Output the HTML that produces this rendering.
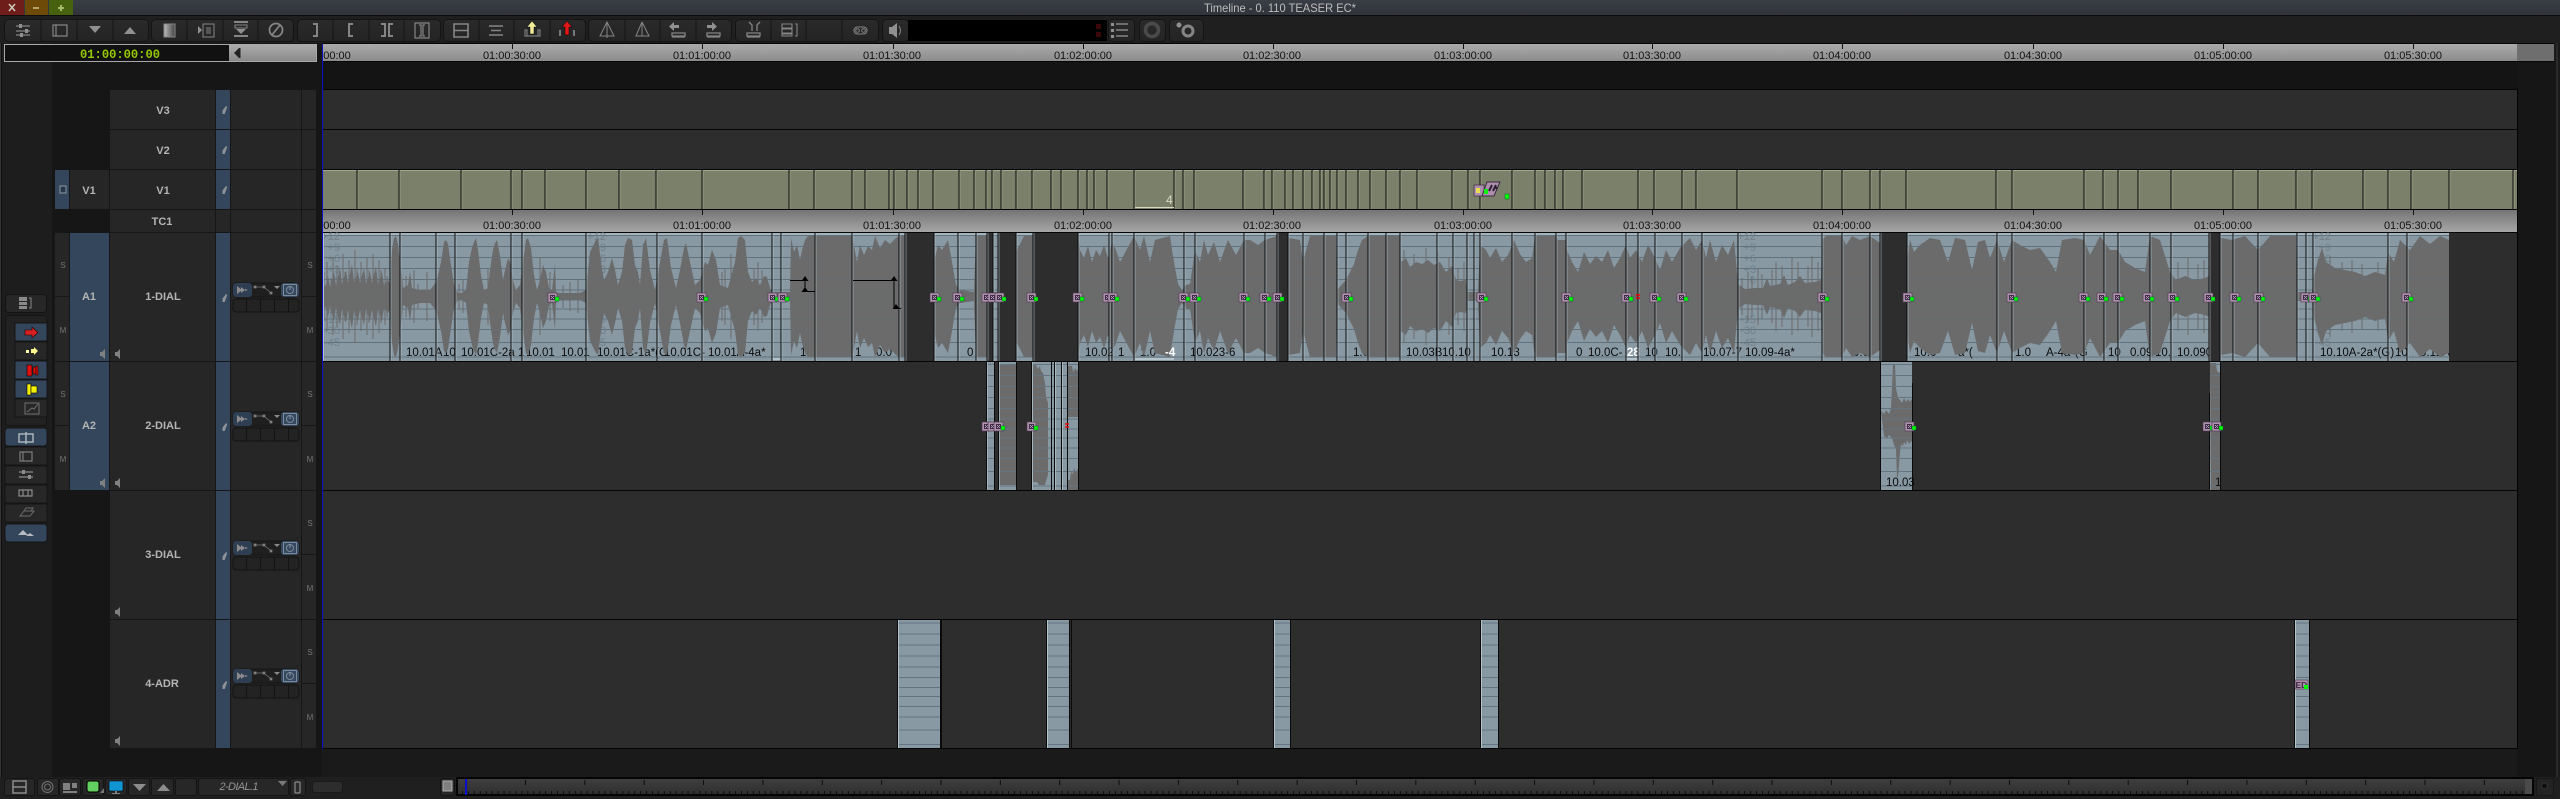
<!DOCTYPE html>
<html><head><meta charset="utf-8"><title>Timeline - 0. 110 TEASER EC*</title>
<style>html,body{margin:0;padding:0;background:#1a1a1a;width:2560px;height:799px;overflow:hidden}svg{display:block}text{font-family:"Liberation Sans",sans-serif}</style></head>
<body>
<svg xmlns="http://www.w3.org/2000/svg" width="2560" height="799" viewBox="0 0 2560 799">
<defs>
<linearGradient id="r1" x1="0" y1="0" x2="0" y2="1"><stop offset="0" stop-color="#ababab"/><stop offset="1" stop-color="#8a8a8a"/></linearGradient>
<linearGradient id="r2" x1="0" y1="0" x2="0" y2="1"><stop offset="0" stop-color="#757575"/><stop offset="1" stop-color="#a6a6a6"/></linearGradient>
<linearGradient id="tb" x1="0" y1="0" x2="0" y2="1"><stop offset="0" stop-color="#3a3e45"/><stop offset="1" stop-color="#30343a"/></linearGradient>
<linearGradient id="btn" x1="0" y1="0" x2="0" y2="1"><stop offset="0" stop-color="#2a2a2a"/><stop offset="1" stop-color="#242424"/></linearGradient>
<linearGradient id="sc" x1="0" y1="0" x2="0" y2="1"><stop offset="0" stop-color="#3f3f3f"/><stop offset="1" stop-color="#2f2f2f"/></linearGradient>
<linearGradient id="dith" x1="0" y1="0" x2="1" y2="0"><stop offset="0" stop-color="#bbb"/><stop offset="1" stop-color="#444"/></linearGradient>
<pattern id="minor" patternUnits="userSpaceOnUse" x="462" y="790" width="5.936" height="5"><rect x="0" y="1" width="1" height="3" fill="#0c0c0c"/></pattern>
<pattern id="major" patternUnits="userSpaceOnUse" x="465.6" y="780" width="59.36" height="6"><rect x="0" y="0" width="1" height="5" fill="#0c0c0c"/></pattern>
<clipPath id="ca1"><rect x="322" y="233" width="2127" height="128"/></clipPath>
<clipPath id="ca3"><rect x="987" y="362" width="7" height="128"/><rect x="999" y="362" width="18" height="128"/><rect x="1032" y="362" width="19" height="128"/><rect x="1052" y="362" width="15" height="128"/><rect x="1068" y="362" width="11" height="128"/><rect x="1881" y="362" width="31" height="128"/><rect x="2210" y="362" width="11" height="128"/></clipPath>
<clipPath id="ca4"><rect x="898" y="620" width="42" height="128"/><rect x="1047" y="620" width="22" height="128"/><rect x="1274" y="620" width="16" height="128"/><rect x="1481" y="620" width="17" height="128"/><rect x="2295" y="620" width="14" height="128"/></clipPath>
<path id="wave" d="M322 296.5L322 288 326 285 328 276 330 287 334 272 336 286 340 268 342 284 346 270 348 283 352 264 354 282 358 272 360 283 364 268 366 284 370 272 372 283 376 266 378 284 382 272 384 285 388 280 390 284 392 250 394 238 396 236 398 245 400 262 402 275 403 288 408 285 410 272 412 288 420 290 430 290 434 285 437 280 441 262 444 242 446 240 448 244 451 265 454 285 458 293 462 293 466 290 469 262 472 248 474 242 476 238 478 250 481 275 484 290 488 288 490 270 493 250 495 243 497 240 500 256 503 280 505 270 508 258 510 262 513 280 516 290 520 285 523 262 526 240 528 238 531 248 534 275 537 290 540 280 543 265 546 272 549 288 552 290 555 264 556 292 560 293 580 293 586 290 590 252 596 240 598 238 601 262 604 280 608 272 612 258 615 270 618 285 622 272 625 245 628 238 632 240 635 265 638 272 640 285 643 245 646 238 650 270 655 290 660 262 664 240 667 238 671 268 676 288 680 270 684 248 686 243 690 262 695 285 700 280 705 262 708 265 712 250 716 260 720 285 728 288 735 262 738 238 741 236 745 240 748 272 752 282 756 278 760 285 764 276 767 277 770 288 772 292 790 292 791 238 794 252 797 245 800 260 802 250 805 240 808 236 852 236 853 240 857 262 860 245 864 255 868 246 872 250 875 236 880 248 885 240 890 244 896 238 899 236 933 236 934 262 938 245 942 250 948 240 952 262 956 285 960 290 974 292 976 236 987 236 993 292 998 292 1017 250 1024 236 1033 236 1078 236 1080 250 1084 258 1088 246 1092 262 1096 250 1100 256 1104 245 1108 258 1112 242 1116 250 1120 262 1134 236 1140 250 1144 236 1150 262 1155 240 1170 236 1172 250 1175 268 1178 284 1182 290 1186 285 1190 284 1195 250 1200 262 1204 240 1208 255 1214 242 1220 262 1228 240 1236 255 1244 240 1250 240 1258 245 1265 240 1277 236 1300 240 1303 262 1310 236 1336 236 1337 290 1346 280 1350 272 1354 264 1358 250 1362 240 1368 236 1400 236 1401 262 1406 258 1410 267 1416 262 1422 264 1428 260 1434 265 1440 262 1446 272 1452 266 1456 280 1460 281 1466 280 1467 292 1478 292 1480 245 1486 250 1490 258 1496 248 1502 262 1508 255 1514 240 1520 254 1526 262 1532 258 1535 236 1556 236 1558 240 1566 240 1567 250 1572 262 1578 272 1584 252 1590 264 1596 256 1602 262 1608 250 1614 268 1620 258 1626 245 1630 258 1636 250 1642 262 1648 245 1655 258 1660 270 1666 250 1672 262 1680 248 1690 238 1696 250 1702 240 1706 258 1710 240 1716 262 1722 245 1728 255 1734 240 1738 284 1745 289 1755 288 1763 288 1767 278 1770 286 1780 284 1784 275 1788 285 1795 282 1800 276 1805 283 1815 282 1821 280 1822 240 1826 236 1842 236 1846 245 1852 236 1860 240 1870 236 1907 262 1910 240 1914 252 1920 245 1930 238 1940 240 1948 262 1955 238 1965 240 1972 270 1978 242 1985 240 1990 258 1997 240 2004 262 2012 240 2020 245 2030 250 2040 248 2050 262 2056 272 2062 240 2075 238 2084 240 2090 255 2100 236 2110 250 2118 250 2125 262 2135 268 2145 272 2150 236 2160 240 2170 272 2176 280 2185 276 2195 280 2205 278 2209 276 2221 238 2232 240 2245 236 2258 250 2270 236 2296 236 2297 292 2312 292 2314 276 2318 260 2322 248 2326 262 2335 268 2345 270 2355 272 2365 276 2375 272 2385 275 2388 252 2394 262 2400 240 2410 250 2420 236 2430 244 2440 236 2449 240 2449 296.5Z"/>
<path id="spikes" d="M324 296V272M327 296V262M331 296V278M333 296V258M337 296V266M339 296V275M343 296V254M345 296V272M349 296V260M351 296V276M355 296V250M357 296V268M361 296V262M363 296V274M367 296V258M369 296V270M373 296V254M375 296V278M379 296V260M381 296V270M385 296V268M387 296V276M406 296V276M414 296V270M418 296V284M427 296V272M459 296V284M463 296V280M488 296V268M540 296V258M550 296V272M563 296V285M570 296V282M578 296V280M722 296V272M725 296V268M731 296V254M754 296V268M758 296V262M762 296V270M1404 296V250M1414 296V254M1426 296V248M1438 296V252M1449 296V258M1458 296V268M1464 296V262M1742 296V278M1748 296V272M1752 296V276M1758 296V268M1762 296V274M1772 296V270M1776 296V262M1782 296V266M1792 296V258M1798 296V262M1808 296V266M1812 296V256M1818 296V262M2178 296V262M2188 296V258M2198 296V264M2204 296V260M2330 296V256M2342 296V262M2352 296V260M2362 296V264M2378 296V262"/>
<path id="grid" d="M0 3.500H2600M0 14.500H2600M0 25.500H2600M0 36.500H2600M0 47.500H2600M0 58H2600M0 68H2600M0 77H2600M0 87H2600M0 97.500H2600M0 110.500H2600M0 125H2600"/>
<path id="v1cuts" d="M357 170V209M399 170V209M461 170V209M511 170V209M522 170V209M545 170V209M586 170V209M619 170V209M656 170V209M702 170V209M789 170V209M814 170V209M852 170V209M865 170V209M889 170V209M894 170V209M907 170V209M918 170V209M933 170V209M959 170V209M974 170V209M986 170V209M992 170V209M1001 170V209M1016 170V209M1032 170V209M1051 170V209M1061 170V209M1078 170V209M1087 170V209M1094 170V209M1107 170V209M1134 170V209M1174 170V209M1183 170V209M1194 170V209M1243 170V209M1264 170V209M1272 170V209M1285 170V209M1293 170V209M1303 170V209M1312 170V209M1320 170V209M1324 170V209M1330 170V209M1337 170V209M1346 170V209M1358 170V209M1370 170V209M1386 170V209M1400 170V209M1417 170V209M1452 170V209M1468 170V209M1480 170V209M1512 170V209M1535 170V209M1545 170V209M1555 170V209M1563 170V209M1582 170V209M1638 170V209M1654 170V209M1682 170V209M1696 170V209M1737 170V209M1822 170V209M1842 170V209M1870 170V209M1880 170V209M1906 170V209M1996 170V209M2012 170V209M2084 170V209M2103 170V209M2118 170V209M2138 170V209M2171 170V209M2233 170V209M2258 170V209M2296 170V209M2312 170V209M2363 170V209M2388 170V209M2411 170V209M2449 170V209M2513 170V209"/>
<path id="a1cuts" d="M390 233V361M400 233V361M436 233V361M455 233V361M511 233V361M522 233V361M586 233V361M657 233V361M702 233V361M772 233V361M781 233V361M815 233V361M852 233V361M899 233V361M905 233V361M934 233V361M958 233V361M976 233V361M987 233V361M993 233V361M998 233V361M1016 233V361M1033 233V361M1078 233V361M1109 233V361M1112 233V361M1134 233V361M1184 233V361M1195 233V361M1244 233V361M1265 233V361M1277 233V361M1288 233V361M1303 233V361M1324 233V361M1337 233V361M1346 233V361M1368 233V361M1386 233V361M1400 233V361M1437 233V361M1453 233V361M1467 233V361M1474 233V361M1480 233V361M1512 233V361M1535 233V361M1556 233V361M1566 233V361M1626 233V361M1638 233V361M1655 233V361M1682 233V361M1702 233V361M1738 233V361M1822 233V361M1842 233V361M1870 233V361M1880 233V361M1907 233V361M1997 233V361M2012 233V361M2084 233V361M2104 233V361M2118 233V361M2150 233V361M2171 233V361M2209 233V361M2220 233V361M2233 233V361M2258 233V361M2297 233V361M2306 233V361M2313 233V361M2388 233V361M2407 233V361"/>
<g id="fx"><rect x="0" y="0" width="9" height="9" fill="#ae8fae" stroke="#4a3a4e" stroke-width=".6"/><rect x="2" y="2" width="5" height="5" fill="#3f2c46"/><path d="M3 3h1v1h-1zM5 3h1v1h-1zM4 4h1v1h-1zM3 5h1v1h-1zM5 5h1v1h-1z" fill="#b79bb8"/><rect x="7" y="4" width="4" height="4" fill="#0f0" stroke="#063" stroke-width=".5"/></g>
<g id="ctl">
<rect x="233" y="0" width="66" height="14" rx="3" fill="#1f1f1f" stroke="#151515"/>
<rect x="233" y="0" width="19" height="14" rx="3" fill="#2e3f53"/>
<rect x="281" y="0" width="18" height="14" rx="3" fill="#34485f"/>
<path d="M237 3v8l5-4zM241 4v6l4-3zM245 6v2l3-1z" fill="#8c8c8c"/>
<path d="M254 3h2v2h-2zM270 9h2v2h-2zM263 3h2v2h-2zM256 4h7M265 5l5 4" stroke="#7a7a7a" stroke-width=".8" fill="#8a8a8a"/><path d="M274 3h6l-3 3z" fill="#8a8a8a"/>
<rect x="283.500" y="1.500" width="13" height="11" fill="none" stroke="#7d8a99"/><circle cx="290" cy="7" r="3.500" fill="none" stroke="#7d8a99"/><path d="M290 3v4" stroke="#8a97a8"/>
<rect x="233" y="16" width="66" height="13" rx="3" fill="#232323" stroke="#131313"/>
<path d="M246.500 16v13M260.500 16v13M274.500 16v13M288.500 16v13" stroke="#131313"/>
</g>
<path id="spk" d="M0 2h2l3-3v10l-3-3h-2z" fill="#808080"/>
<path id="lk" d="M4 0l1.200 1-2.500 7h-2.200v-3.500z" fill="#8d9399"/>
</defs>

<rect width="2560" height="799" fill="#1a1a1a"/>

<!-- title bar -->
<rect width="2560" height="15" fill="url(#tb)"/>
<rect y="15" width="2560" height="1" fill="#0d0d0d"/>
<rect x="0" y="0" width="24" height="15" fill="#6e1d1a"/>
<rect x="25" y="0" width="23" height="15" fill="#6e4a08"/>
<rect x="49" y="0" width="24" height="15" fill="#47620e"/>
<path d="M9 4l6 7M15 4l-6 7" stroke="#ccb" stroke-width="1.500"/>
<path d="M33 8h6" stroke="#b9a26a" stroke-width="2"/>
<path d="M58 8h6M61 5v6" stroke="#a5b96a" stroke-width="2"/>
<text x="1204" y="12" font-size="12" fill="#bdbdbd" textLength="152" lengthAdjust="spacingAndGlyphs">Timeline - 0. 110 TEASER EC*</text>

<!-- toolbar -->
<rect y="16" width="2560" height="27" fill="#1f1f1f"/>
<g fill="url(#btn)" stroke="#141414">
<rect x="4.500" y="19.500" width="144" height="22" rx="4"/>
<rect x="151.500" y="19.500" width="142" height="22" rx="4"/>
<rect x="297.500" y="19.500" width="143" height="22" rx="4"/>
<rect x="443.500" y="19.500" width="142" height="22" rx="4"/>
<rect x="588.500" y="19.500" width="143" height="22" rx="4"/>
<rect x="735.500" y="19.500" width="143" height="22" rx="4"/>
<rect x="882.500" y="19.500" width="26" height="22" rx="4"/>
<rect x="1108.500" y="19.500" width="26" height="22" rx="4"/>
<rect x="1139.500" y="19.500" width="26" height="22" rx="4"/>
<rect x="1169.500" y="19.500" width="34" height="22" rx="4"/>
</g>
<path d="M41 20v21M77 20v21M113 20v21M187 20v21M223 20v21M258 20v21M333 20v21M369 20v21M404 20v21M479 20v21M514 20v21M550 20v21M625 20v21M660 20v21M696 20v21M771 20v21M806 20v21M842 20v21" stroke="#151515"/>
<rect x="908" y="20" width="199" height="21" fill="#000"/>
<rect x="1096" y="24" width="5" height="5" fill="#3a0808"/><rect x="1096" y="32" width="5" height="5" fill="#3a0808"/>
<!-- toolbar icons -->
<g fill="none" stroke="#858585" stroke-width="2">
<path d="M16 26h14M16 31h14M16 35h14" stroke-width="1.300"/>
<path d="M53 25h14v11h-14zM56 25v11" stroke-width="1.200"/>
<path d="M234 22h14M234 36h14" stroke-width="2"/>
<path d="M235 25h12v3h-12z" stroke-width="1"/>
<circle cx="276" cy="30" r="6.500" stroke-width="1.800"/><path d="M272 35l8-10" stroke-width="1.800"/>
<path d="M313 24h4v12h-4" stroke-width="2"/>
<path d="M353 24h-4v12h4" stroke-width="2"/>
<path d="M381 24h4v12h-4M393 24h-4v12h4" stroke-width="2"/>
<path d="M415 23h14v15h-14zM419 25h2v11h-2M425 25h-2v11h2" stroke-width="1.200"/>
<path d="M454 24h14v13h-14zM454 30.500h14" stroke-width="1.600"/>
<path d="M489 26h14M489 35h14M491 30.500h10" stroke-width="1.600"/>
<path d="M607 22l-7 14h14zM607 22v16" stroke-width="1"/>
<path d="M642 22v14h7zM642 22l-6 14h6" stroke-width="1"/>
<path d="M672 33h13v3h-13zM672 37h13" stroke-width="1.300"/>
<path d="M707 33h13v3h-13zM707 37h13" stroke-width="1.300"/>
<path d="M747 33h13v3h-13zM747 37h13M749 22l3 3v6M760 22l-3 3v6" stroke-width="1.300"/>
<path d="M782 24h10v4h-10zM782 29h10v4h-10zM782 34h10v2h-10zM795 24h2v12h-2" stroke-width="1.100"/>
<rect x="854" y="27" width="13" height="7" rx="3.500" stroke-width="1.100"/><circle cx="857.500" cy="30.500" r="1.800" stroke-width="1"/><circle cx="863.500" cy="30.500" r="1.800" stroke-width="1"/>
<path d="M1116 24h12M1116 30h12M1116 36h12" stroke-width="1.500"/>
<circle cx="1152" cy="30" r="6.500" stroke="#4a4a4a" stroke-width="3.500"/>
<circle cx="1188" cy="31" r="5" stroke-width="3"/>
</g>
<g fill="#909090">
<rect x="19" y="24" width="3" height="4"/><rect x="25" y="29" width="3" height="4"/><rect x="20" y="33" width="3" height="4"/>
<path d="M89 26h12l-6 7zM124 34h12l-6-7z"/>
<rect x="164" y="24" width="11" height="13" fill="url(#dith)" stroke="#888"/>
<path d="M198 26v8l4-4z"/><rect x="203" y="24" width="11" height="13" fill="none" stroke="#858585"/><rect x="206" y="27" width="5" height="7" fill="#555"/>
<path d="M236 29h10l-5 5z"/>
<path d="M712 22l5 4.500-5 4.500v-3h-5v-3h5zM674 22l-5 4.500 5 4.500v-3h5v-3h-5z"/>
<path d="M889 27h3l5-4v15l-5-4h-3z"/><path d="M899 26c2 3 2 6 0 9" stroke="#888" fill="none"/>
<rect x="1111" y="23" width="3" height="3"/><rect x="1111" y="29" width="3" height="3"/><rect x="1111" y="35" width="3" height="3"/>
<circle cx="1179" cy="25" r="2.500"/>
</g>
<path d="M532 21l5 6h-3v7h-4v-7h-3z" fill="#f2ec9a" stroke="#000" stroke-width=".5"/>
<path d="M525 36h2v-6h-2zM538 36h2v-6h-2zM527 36h11" stroke="#777" stroke-width="1.200" fill="none"/>
<path d="M567 21l5 6h-3v8h-4v-8h-3z" fill="#e01818" stroke="#000" stroke-width=".5"/>
<path d="M560 36v-6M574 36v-6" stroke="#777" stroke-width="2" fill="none"/>

<!-- left panel bg -->
<rect y="43" width="322" height="734" fill="#161616"/>
<rect y="43" width="52" height="734" fill="#1d1d1d"/>
<rect x="0" y="43" width="1" height="756" fill="#333"/>
<rect x="1" y="43" width="1" height="756" fill="#111"/>

<!-- timecode box -->
<rect x="4" y="44" width="313" height="18" fill="#a8a8a8"/>
<rect x="5" y="45" width="224" height="16" fill="#111"/>
<rect x="229" y="45" width="87" height="16" fill="url(#r1)"/>
<path d="M239 48v10l-5-5z" fill="#222"/><rect x="239" y="48" width="1.500" height="10" fill="#222"/>
<text x="80" y="58" font-size="13" font-weight="bold" fill="#96c800" textLength="80" lengthAdjust="spacingAndGlyphs" style="font-family:'Liberation Mono',monospace">01:00:00:00</text>

<!-- main track bg -->
<rect x="322" y="44" width="2195" height="18" fill="url(#r1)"/>
<rect x="2517" y="44" width="37" height="18" fill="#6e6e6e"/>
<rect x="322" y="43" width="2232" height="1" fill="#050505"/>
<rect x="322" y="61" width="2232" height="1" fill="#050505"/>
<rect x="322" y="62" width="2195" height="27" fill="#141414"/>
<rect x="322" y="89" width="2195" height="660" fill="#2d2d2d"/>
<rect x="2517" y="62" width="40" height="715" fill="#161616"/>
<rect x="2556" y="43" width="2" height="756" fill="#2a2a2a"/>
<path d="M322 89.500H2517M322 129.500H2517M322 169.500H2517" stroke="#050505"/>
<path d="M322 748.500H2518M2517.500 89V749" stroke="#050505"/>

<!-- first ruler -->
<path d="M512.500 44v5M702.500 44v5M893.500 44v5M1083.500 44v5M1273.500 44v5M1463.500 44v5M1652.500 44v5M1842.500 44v5M2033.500 44v5M2223.500 44v5M2413.500 44v5" stroke="#111"/>
<g font-size="11" fill="#111" text-anchor="middle">
<text x="337" y="59">00:00</text>
<text x="512" y="59">01:00:30:00</text><text x="702" y="59">01:01:00:00</text><text x="892" y="59">01:01:30:00</text><text x="1083" y="59">01:02:00:00</text><text x="1272" y="59">01:02:30:00</text><text x="1463" y="59">01:03:00:00</text><text x="1652" y="59">01:03:30:00</text><text x="1842" y="59">01:04:00:00</text><text x="2033" y="59">01:04:30:00</text><text x="2223" y="59">01:05:00:00</text><text x="2413" y="59">01:05:30:00</text>
</g>

<!-- V1 clips -->
<rect x="322" y="170" width="2195" height="39" fill="#7a8069"/>
<rect x="322" y="170" width="2195" height="1" fill="#a3a88f"/>
<use href="#v1cuts" x="1" stroke="#969b83" stroke-width="1"/>
<use href="#v1cuts" stroke="#0a0a0a" stroke-width="1"/>
<text x="1166" y="204" font-size="12" fill="#d9d9c4">4</text>
<rect x="1135" y="207" width="39" height="1" fill="#d9d9c0"/>
<path d="M322 209.500H2517" stroke="#050505"/>
<g>
<rect x="1474" y="185" width="10" height="11" fill="#ae8fae" stroke="#3a2a3e" stroke-width=".7"/>
<rect x="1476" y="188" width="4" height="5" fill="#e8dc50"/>
<path d="M1487 182h13l-6 14h-12z" fill="#ae8fae" stroke="#3a2a3e"/>
<path d="M1489 191l3-6M1493 191l3-6M1497 187l-1 2" stroke="#2c1e30" stroke-width="2"/>
<rect x="1484" y="189" width="4" height="5" fill="#1e1"/>
<rect x="1505" y="194" width="4" height="5" fill="#0f0" stroke="#063" stroke-width=".5"/>
</g>

<!-- second ruler -->
<rect x="322" y="210" width="2195" height="22" fill="url(#r2)"/>
<path d="M512.500 210v5M702.500 210v5M893.500 210v5M1083.500 210v5M1273.500 210v5M1463.500 210v5M1652.500 210v5M1842.500 210v5M2033.500 210v5M2223.500 210v5M2413.500 210v5" stroke="#111"/>
<g font-size="11" fill="#111" text-anchor="middle">
<text x="337" y="229">00:00</text>
<text x="512" y="229">01:00:30:00</text><text x="702" y="229">01:01:00:00</text><text x="892" y="229">01:01:30:00</text><text x="1083" y="229">01:02:00:00</text><text x="1272" y="229">01:02:30:00</text><text x="1463" y="229">01:03:00:00</text><text x="1652" y="229">01:03:30:00</text><text x="1842" y="229">01:04:00:00</text><text x="2033" y="229">01:04:30:00</text><text x="2223" y="229">01:05:00:00</text><text x="2413" y="229">01:05:30:00</text>
</g>
<path d="M322 232.500H2517" stroke="#050505"/>

<!-- A1 -->
<rect x="322" y="233" width="2127" height="128" fill="#8899a4"/>
<rect x="322" y="233" width="2127" height="2" fill="#a3b4bd"/>
<g clip-path="url(#ca1)"><use href="#grid" y="232" stroke="#647480" stroke-width="1"/></g>
<g font-size="11" fill="#6f808b" text-anchor="end">
<text x="340" y="240">+12</text><text x="340" y="251">+9</text><text x="340" y="262">+6</text><text x="340" y="273">+3</text><text x="340" y="284">0</text><text x="340" y="295">-3</text><text x="340" y="304">-7</text><text x="340" y="313">-11</text><text x="340" y="323">-15</text><text x="340" y="334">-30</text><text x="340" y="346">-45</text>
<text x="606" y="240">+12</text><text x="606" y="251">+9</text><text x="606" y="262">+6</text><text x="606" y="273">+3</text><text x="606" y="323">-15</text><text x="606" y="334">-30</text><text x="606" y="346">-45</text>
<text x="1756" y="240">+12</text><text x="1756" y="251">+9</text><text x="1756" y="262">+6</text><text x="1756" y="273">+3</text><text x="1756" y="284">0</text><text x="1756" y="323">-15</text><text x="1756" y="334">-30</text><text x="1756" y="346">-45</text>
<text x="2331" y="240">+12</text><text x="2331" y="251">+9</text><text x="2331" y="262">+6</text><text x="2331" y="273">+3</text><text x="2331" y="284">0</text><text x="2331" y="323">-15</text><text x="2331" y="334">-30</text><text x="2331" y="346">-45</text>
</g>
<g font-size="11.500" fill="#0a0a0a">
<text x="406" y="356">10.01A</text><text x="443" y="356">10</text><text x="461" y="356">10.01C-2a</text><text x="518" y="356">1</text><text x="526" y="356">10.01</text><text x="561" y="356">10.01</text><text x="597" y="356">10.01C-1a*(G</text><text x="664" y="356">10.01C-</text><text x="708" y="356">10.01A-4a*</text>
<text x="800" y="356">10</text><text x="837" y="356">0.0</text><text x="855" y="356">1</text><text x="876" y="356">0.0</text><text x="967" y="356">0</text>
<text x="1085" y="356">10.02</text><text x="1118" y="356">1</text><text x="1140" y="356">1.0</text><text x="1190" y="356">10.023-6</text><text x="1272" y="356">10</text><text x="1310" y="356">1</text><text x="1353" y="356">1.0</text><text x="1406" y="356">10.03B</text><text x="1442" y="356">10.10</text><text x="1491" y="356">10.13</text><text x="1541" y="356">10.</text><text x="1576" y="356">0</text><text x="1588" y="356">10.0C-</text><text x="1645" y="356">10</text><text x="1665" y="356">10.</text>
<text x="1703" y="356">10.07-7</text><text x="1745" y="356">10.09-4a*</text><text x="1853" y="356">0.0</text><text x="1914" y="356">10.0</text><text x="1958" y="356">a*(</text><text x="2015" y="356">1.0</text><text x="2046" y="356">A-4a*(G</text><text x="2108" y="356">10</text><text x="2130" y="356">0.09</text><text x="2155" y="356">10.</text><text x="2177" y="356">10.090</text><text x="2270" y="356">0.90</text><text x="2320" y="356">10.10A-2a*(G)</text><text x="2395" y="356">10</text><text x="2420" y="356">0.12A</text>
</g>
<use href="#wave" fill="#6b6b6b"/>
<use href="#wave" fill="#6b6b6b" transform="translate(0 593) scale(1 -1)"/>
<use href="#spikes" stroke="#6b6b6b" stroke-width="1" fill="none"/>
<use href="#spikes" stroke="#6b6b6b" stroke-width="1" fill="none" transform="translate(0 593) scale(1 -1)"/>
<g clip-path="url(#ca1)"><use href="#grid" y="232" stroke="#5f6f79" stroke-width="1" opacity=".35"/></g>
<g font-size="11.500" font-weight="bold" fill="#fff"><text x="1165" y="356">-4</text><text x="1627" y="356">28</text></g>
<path d="M1135 359h39M1626 359h12M772 359h9" stroke="#e4eef2"/>
<!-- gaps -->
<g fill="#2d2d2d"><rect x="905" y="233" width="29" height="128"/><rect x="987" y="233" width="6" height="128"/><rect x="998" y="233" width="18" height="128"/><rect x="1033" y="233" width="45" height="128"/><rect x="1277" y="233" width="11" height="128"/><rect x="1880" y="233" width="27" height="128"/><rect x="2209" y="233" width="11" height="128"/></g>
<use href="#a1cuts" x="1" stroke="#b3c4cc" stroke-width="1" opacity=".6"/>
<use href="#a1cuts" stroke="#0a0a0a" stroke-width="1"/>
<rect x="322" y="233" width="2" height="128" fill="#b3c4cc"/>
<path d="M322 361.500H2517M322 490.500H2517M322 619.500H2517" stroke="#050505"/>
<!-- keyframes -->
<g stroke="#000" fill="none"><path d="M790 280.500h15v11h10M853 280.500h41v27l7 1"/></g>
<path d="M805 276l3.500 5h-7zM805 287l3.500 5h-7zM894 276l3.500 5h-7zM896 304l3.500 5h-7z" fill="#000"/>
<!-- A1 effects -->
<g>
<use href="#fx" x="548" y="293"/><use href="#fx" x="697" y="293"/><use href="#fx" x="768" y="293"/><use href="#fx" x="778" y="293"/><use href="#fx" x="930" y="293"/><use href="#fx" x="953" y="293"/><use href="#fx" x="982" y="293"/><use href="#fx" x="988" y="293"/><use href="#fx" x="995" y="293"/><use href="#fx" x="1027" y="293"/><use href="#fx" x="1073" y="293"/><use href="#fx" x="1103" y="293"/><use href="#fx" x="1108" y="293"/><use href="#fx" x="1179" y="293"/><use href="#fx" x="1190" y="293"/><use href="#fx" x="1239" y="293"/><use href="#fx" x="1260" y="293"/><use href="#fx" x="1273" y="293"/><use href="#fx" x="1342" y="293"/><use href="#fx" x="1477" y="293"/><use href="#fx" x="1562" y="293"/><use href="#fx" x="1622" y="293"/><use href="#fx" x="1650" y="293"/><use href="#fx" x="1677" y="293"/><use href="#fx" x="1818" y="293"/><use href="#fx" x="1903" y="293"/><use href="#fx" x="2007" y="293"/><use href="#fx" x="2079" y="293"/><use href="#fx" x="2097" y="293"/><use href="#fx" x="2113" y="293"/><use href="#fx" x="2143" y="293"/><use href="#fx" x="2168" y="293"/><use href="#fx" x="2204" y="293"/><use href="#fx" x="2230" y="293"/><use href="#fx" x="2254" y="293"/><use href="#fx" x="2301" y="293"/><use href="#fx" x="2309" y="293"/><use href="#fx" x="2402" y="293"/>
</g>
<path d="M1636 295h4M1636 298h4" stroke="#e00" stroke-width="1.500"/>

<!-- A2 clips -->
<g fill="#8899a4"><rect x="987" y="362" width="7" height="128"/><rect x="999" y="362" width="18" height="128"/><rect x="1032" y="362" width="19" height="128"/><rect x="1052" y="362" width="3" height="128"/><rect x="1055" y="362" width="6" height="128"/><rect x="1062" y="362" width="5" height="128"/><rect x="1068" y="362" width="11" height="128"/><rect x="1881" y="362" width="31" height="128"/><rect x="2210" y="362" width="11" height="128"/></g>
<g clip-path="url(#ca3)">
<path d="M999 365h18v120h-18zM1033 365h3l2 4 2-3 1 5 2 2 2 10 1 14 2 6v72l-2 6-1 4h-6l-2-3h-4zM2210 363h6l1 8 4 3v116h-10z" fill="#6b6b6b"/>
<path d="M1068 366h4l1 6 2-4 2 3 2-4v50h-11zM1068 480h2l1-8 2 2 1-6 2 4 3-6v30h-11z" fill="#6b6b6b"/>
<path d="M1881 411l3 3 2-4 3 4 2-6 1-20 1-24 2 0 1 24 2 10 2 2 2 3 2-5 2 4 2-3 2 3 1-3 2 2v42l-2-2-2 3-2-4-1 5-2-3-1 4-2-2-1 8-2 25-1 0-1-28-2-4-2-7-3-3-2 3-3-2z" fill="#6b6b6b"/>
<use href="#grid" y="361" stroke="#647480" stroke-width="1"/>
</g>
<path d="M986.500 362v128M994.500 362v128M998.500 362v128M1016.500 362v128M1031.500 362v128M1051.500 362v128M1054.500 362v128M1061.500 362v128M1067.500 362v128M1078.500 362v128M1880.500 362v128M1912.500 383v107M2209.500 393v97M2220.500 362v128" stroke="#0a0a0a"/>
<path d="M987.500 362v128M999.500 362v128M1032.500 362v128M1055.500 362v128M1062.500 362v128" stroke="#b3c4cc" opacity=".7"/>
<text x="1886" y="486" font-size="11.500" fill="#0a0a0a">10.03</text>
<text x="2215" y="486" font-size="11.500" fill="#0a0a0a">1</text>
<use href="#fx" x="982" y="422"/><use href="#fx" x="988" y="422"/><use href="#fx" x="994" y="422"/><use href="#fx" x="1027" y="422"/><use href="#fx" x="1905" y="422"/><use href="#fx" x="2203" y="422"/><use href="#fx" x="2212" y="422"/>
<path d="M1065 424h4M1065 427h4" stroke="#e00" stroke-width="1.500"/>

<!-- A4 clips -->
<g fill="#8899a4"><rect x="898" y="620" width="42" height="128"/><rect x="1047" y="620" width="22" height="128"/><rect x="1274" y="620" width="16" height="128"/><rect x="1481" y="620" width="17" height="128"/><rect x="2295" y="620" width="14" height="128"/></g>
<g clip-path="url(#ca4)"><use href="#grid" y="619.500" stroke="#647480" stroke-width="1"/></g>
<path d="M898.500 620v128M1047.500 620v128M1274.500 620v128M1481.500 620v128M2295.500 620v128" stroke="#b3c4cc"/>
<path d="M897.500 620v128M940.500 620v128M941.500 620v128M1046.500 620v128M1069.500 620v128M1071.500 620v128M1273.500 620v128M1290.500 620v128M1480.500 620v128M1498.500 620v128M2294.500 620v128M2309.500 620v128" stroke="#0a0a0a"/>
<rect x="2295" y="680" width="13" height="9" fill="#ae8fae" stroke="#4a3a4e" stroke-width=".6"/>
<text x="2295.500" y="688" font-size="8.500" font-weight="bold" fill="#3a2a3e">ED</text>
<rect x="2304" y="685" width="4" height="4" fill="#0f0"/>

<!-- playhead -->
<rect x="322" y="44" width="1" height="705" fill="#0a10c8"/>

<!-- track headers -->
<g fill="#262626">
<rect x="110" y="90" width="105" height="39"/><rect x="110" y="130" width="105" height="39"/><rect x="110" y="170" width="105" height="39"/>
<rect x="110" y="210" width="105" height="22"/>
<rect x="110" y="233" width="105" height="128"/><rect x="110" y="362" width="105" height="128"/><rect x="110" y="491" width="105" height="128"/><rect x="110" y="620" width="105" height="128"/>
<rect x="231" y="90" width="70" height="39"/><rect x="231" y="130" width="70" height="39"/><rect x="231" y="170" width="70" height="39"/><rect x="231" y="210" width="70" height="22"/><rect x="216" y="210" width="14" height="22"/>
<rect x="231" y="233" width="70" height="128"/><rect x="231" y="362" width="70" height="128"/><rect x="231" y="491" width="70" height="128"/><rect x="231" y="620" width="70" height="128"/>
<rect x="302" y="90" width="14" height="39"/><rect x="302" y="130" width="14" height="39"/><rect x="302" y="170" width="14" height="39"/><rect x="302" y="210" width="14" height="22"/>
<rect x="302" y="233" width="14" height="63"/><rect x="302" y="297" width="14" height="64"/><rect x="302" y="362" width="14" height="63"/><rect x="302" y="426" width="14" height="64"/><rect x="302" y="491" width="14" height="63"/><rect x="302" y="555" width="14" height="64"/><rect x="302" y="620" width="14" height="63"/><rect x="302" y="684" width="14" height="64"/>
<rect x="70" y="170" width="39" height="39"/>
<rect x="55" y="233" width="14" height="63"/><rect x="55" y="297" width="14" height="64"/><rect x="55" y="362" width="14" height="63"/><rect x="55" y="426" width="14" height="64"/>
</g>
<g fill="#33465b">
<rect x="216" y="90" width="14" height="39"/><rect x="216" y="130" width="14" height="39"/><rect x="216" y="170" width="14" height="39"/>
<rect x="216" y="233" width="14" height="128"/><rect x="216" y="362" width="14" height="128"/><rect x="216" y="491" width="14" height="128"/><rect x="216" y="620" width="14" height="128"/>
<rect x="55" y="170" width="14" height="39"/>
<rect x="70" y="233" width="39" height="128"/><rect x="70" y="362" width="39" height="128"/>
</g>
<rect x="60" y="186" width="6" height="7" fill="#26374a" stroke="#8f98a2"/>
<g>
<use href="#lk" x="222" y="106"/><use href="#lk" x="222" y="146"/><use href="#lk" x="222" y="186"/>
<use href="#lk" x="222" y="294"/><use href="#lk" x="222" y="423"/><use href="#lk" x="222" y="552"/><use href="#lk" x="222" y="681"/>
<use href="#spk" x="100" y="350"/><use href="#spk" x="115" y="350"/><use href="#spk" x="100" y="479"/><use href="#spk" x="115" y="479"/><use href="#spk" x="115" y="608"/><use href="#spk" x="115" y="737"/>
<use href="#ctl" y="283"/><use href="#ctl" y="412"/><use href="#ctl" y="541"/><use href="#ctl" y="669"/>
</g>
<g font-size="11" font-weight="bold" fill="#b4b4b4" text-anchor="middle">
<text x="163" y="114">V3</text><text x="163" y="154">V2</text><text x="163" y="194">V1</text><text x="89" y="194">V1</text><text x="162" y="225">TC1</text>
<text x="89" y="300">A1</text><text x="89" y="429">A2</text>
<text x="163" y="300">1-DIAL</text><text x="163" y="429">2-DIAL</text><text x="163" y="558">3-DIAL</text><text x="162" y="687">4-ADR</text>
</g>
<g font-size="8" fill="#757575" text-anchor="middle">
<text x="63" y="268">S</text><text x="63" y="333">M</text><text x="63" y="397">S</text><text x="63" y="462">M</text>
<text x="310" y="268">S</text><text x="310" y="333">M</text><text x="310" y="397">S</text><text x="310" y="462">M</text><text x="310" y="526">S</text><text x="310" y="591">M</text><text x="310" y="655">S</text><text x="310" y="720">M</text>
</g>

<!-- left tool palette -->
<rect x="5.500" y="294.500" width="41" height="18" rx="3" fill="#272727" stroke="#141414"/>
<path d="M19 297h8v4h-8zM19 302h8v3h-8zM19 306h8v3h-8z" fill="#8a8a8a"/><path d="M29 298h2v10h-2" stroke="#8a8a8a" fill="none"/>
<rect x="5.500" y="315.500" width="41" height="110" rx="3" fill="#222" stroke="#141414"/>
<rect x="15" y="323" width="32" height="18" fill="#33465b" stroke="#141414"/>
<rect x="15" y="342" width="32" height="18" fill="#272727" stroke="#141414"/>
<rect x="15" y="361" width="32" height="18" fill="#33465b" stroke="#141414"/>
<rect x="15" y="380" width="32" height="18" fill="#33465b" stroke="#141414"/>
<rect x="15" y="399" width="32" height="18" fill="#272727" stroke="#141414"/>
<path d="M25 330h7v-3l6 5.500-6 5.500v-3h-7z" fill="#d92020" stroke="#200" stroke-width=".6"/>
<rect x="26" y="350" width="3" height="3" fill="#ffffb0"/>
<path d="M31 349h3v-2l4 4-4 4v-2h-3z" fill="#fdf690"/>
<rect x="27" y="365" width="5" height="11" fill="#e31010" stroke="#000" stroke-width=".6"/><rect x="33" y="367" width="3" height="7" fill="#e31010" stroke="#000" stroke-width=".6"/><rect x="36" y="366" width="2" height="9" fill="#e31010" stroke="#000" stroke-width=".5"/>
<rect x="27" y="384" width="4" height="11" fill="#f4f000" stroke="#000" stroke-width=".6"/><rect x="31" y="386" width="6" height="7" fill="#f4f000" stroke="#000" stroke-width=".6"/>
<path d="M25 403h14v11h-14zM27 412l5-4 2 1 4-5" fill="none" stroke="#707070"/>
<rect x="5" y="428" width="42" height="18" rx="3" fill="#33465b" stroke="#141414"/>
<path d="M19 434h14v8h-14zM26 432v12" fill="none" stroke="#aab2ba" stroke-width="1.500"/>
<rect x="5" y="447" width="42" height="18" fill="#272727" stroke="#141414"/>
<rect x="5" y="466" width="42" height="18" fill="#272727" stroke="#141414"/>
<rect x="5" y="485" width="42" height="18" fill="#272727" stroke="#141414"/>
<rect x="5" y="504" width="42" height="18" fill="#272727" stroke="#141414"/>
<rect x="5" y="524" width="42" height="18" rx="3" fill="#33465b" stroke="#141414"/>
<path d="M20 452h12v9h-12zM23 452v9" fill="none" stroke="#7c7c7c" stroke-width="1.200"/>
<path d="M19 472h14M19 477h14" stroke="#7c7c7c" stroke-width="1.500"/><rect x="22" y="470" width="3" height="4" fill="#8c8c8c"/><rect x="28" y="475" width="3" height="4" fill="#8c8c8c"/>
<path d="M19 490h13v6h-13zM23 490v6M28 490v6" fill="none" stroke="#8a8a8a" stroke-width="1.200"/>
<path d="M20 516l4-5h10l-4 5zM24 511l2-3h7l-2 3" fill="none" stroke="#6c6c6c"/>
<path d="M18 535l5-5 5 5zM26 536l4-3 4 3z" fill="#b8bcc0"/>

<!-- bottom bar -->
<rect y="777" width="2560" height="22" fill="#1f1f1f"/>
<g fill="#272727" stroke="#141414">
<rect x="4.500" y="778.500" width="30" height="17" rx="2"/><rect x="37.500" y="778.500" width="21" height="17" rx="2"/><rect x="59.500" y="778.500" width="21" height="17" rx="2"/><rect x="82.500" y="778.500" width="21" height="17" rx="2"/><rect x="105.500" y="778.500" width="21" height="17" rx="2"/><rect x="128.500" y="778.500" width="21" height="17" rx="2"/><rect x="151.500" y="778.500" width="22" height="17" rx="2"/><rect x="175.500" y="778.500" width="21" height="17" rx="2"/><rect x="198.500" y="778.500" width="90" height="17" rx="2"/><rect x="290.500" y="778.500" width="15" height="17" rx="2"/><rect x="440.500" y="778.500" width="14" height="17" rx="2"/>
</g>
<rect x="312.500" y="781.500" width="30" height="11" rx="3" fill="#2d2d2d" stroke="#1a1a1a"/>
<path d="M13 781h13v12h-13zM13 787h13" fill="none" stroke="#8c8c8c" stroke-width="1.500"/>
<circle cx="47.500" cy="787" r="5.500" fill="none" stroke="#727272"/><circle cx="47.500" cy="787" r="3" fill="none" stroke="#727272"/>
<path d="M63 783h7v7h-7zM72 783h5v5h-5zM63 791h14v2h-14z" fill="#808080"/>
<rect x="87" y="781" width="12" height="11" rx="2.500" fill="#62d060" stroke="#000"/><path d="M100 793h4v-5z" fill="#777"/>
<rect x="109" y="781" width="14" height="10" rx="1" fill="#0f96d2" stroke="#000" stroke-width=".6"/><path d="M115 791h2v2h3v1h-8v-1h3z" fill="#808080"/>
<path d="M133 784h13l-6.500 7zM157 791h13l-6.500-7z" fill="#8c8c8c"/>
<text x="239" y="790" font-size="11" font-style="italic" fill="#949494" text-anchor="middle" textLength="39">2-DIAL.1</text>
<path d="M278 781h9l-4.500 5z" fill="#7a7a7a"/>
<rect x="295" y="782" width="5" height="11" rx="1" fill="#2a2a2a" stroke="#8c8c8c" stroke-width="1.200"/>
<rect x="443" y="781" width="9" height="10" fill="#808080" stroke="#b0b0b0"/>
<rect x="456" y="777" width="2078" height="19" fill="#050505"/>
<rect x="458" y="779" width="2074" height="15" fill="url(#sc)"/>
<rect x="458" y="780" width="2074" height="6" fill="url(#major)"/>
<rect x="458" y="790" width="2067" height="5" fill="url(#minor)"/>
<rect x="2525" y="779" width="7" height="15" fill="#4a4a4a"/>
<rect x="465" y="779" width="2" height="16" fill="#0a10c8"/>
<rect x="2536.500" y="778.500" width="17" height="17" fill="#232323" stroke="#171717"/>
<circle cx="2544.500" cy="786" r="3" fill="#0f0f0f" stroke="#333"/>
</svg>
</body></html>
